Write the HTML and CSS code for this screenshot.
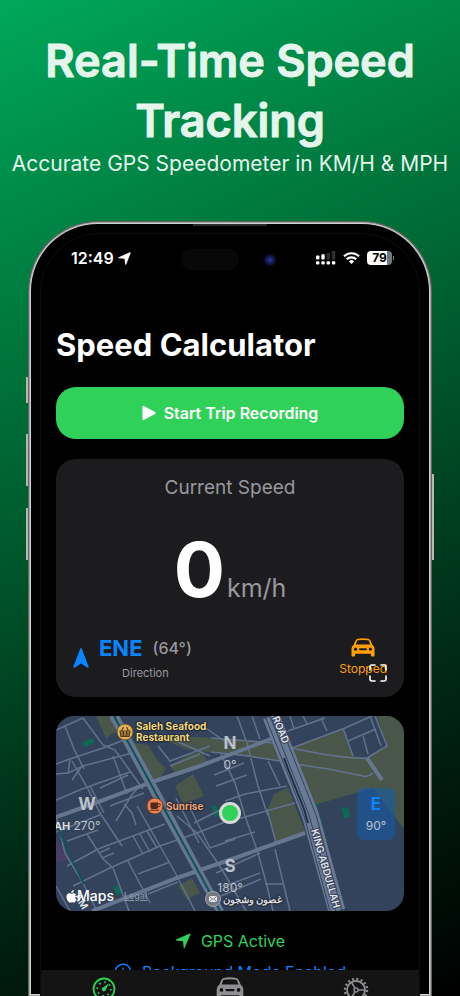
FILE: index.html
```html
<!DOCTYPE html>
<html lang="en">
<head>
    <meta charset="utf-8">
    <meta name="viewport" content="width=device-width, initial-scale=1">
    <title>Speed Calculator</title>
    <link rel="stylesheet" href="styles.css">
</head>
<body>
    <header class="hero">
        <h1>Real-Time Speed Tracking</h1>
        <p>Accurate GPS Speedometer in KM/H &amp; MPH</p>
    </header>

    <main class="phone">
        <span class="side-key key-action"></span>
        <span class="side-key key-up"></span>
        <span class="side-key key-down"></span>
        <span class="side-key key-power"></span>
        <span class="earpiece"></span>

        <div class="screen">
            <div class="status-bar">
                <div class="status-left">
                    <span>12:49</span>
                    <svg width="13" height="13" viewBox="0 0 13 13"><path d="M12.700.9 8.200 12.400q-.5.9-1-.1L6.500 6.700.8 6.200q-1.100-.4 0-1L11.800.2q1.100-.2.900.7z" fill="#fff"/></svg>
                </div>
                <span class="island"></span>
                <span class="lens"></span>
                <div class="status-right">
                    <svg width="20" height="14" viewBox="0 0 20 14">
                        <g fill="#fff">
                            <rect x="0" y="4.500" width="3.400" height="4" rx=".8"/>
                            <rect x="5.300" y="3.300" width="3.400" height="5.200" rx=".8"/>
                            <rect x="0" y="10.200" width="3.400" height="3.200" rx="1"/>
                            <rect x="5.300" y="10.200" width="3.400" height="3.200" rx="1"/>
                            <rect x="10.600" y="10.200" width="3.400" height="3.200" rx="1"/>
                            <rect x="15.900" y="10.200" width="3.400" height="3.200" rx="1"/>
                        </g>
                        <g fill="#303032">
                            <rect x="10.600" y="2" width="3.400" height="6.500" rx=".8"/>
                            <rect x="15.900" y="0" width="3.400" height="8.500" rx=".8"/>
                        </g>
                    </svg>
                    <svg width="17" height="12" viewBox="0 0 17 12">
                        <g fill="none" stroke="#fff" stroke-width="2.200">
                            <path d="M1 4.300a10.800 10.800 0 0 1 15 0"/>
                            <path d="M3.800 7.300a6.700 6.700 0 0 1 9.400 0"/>
                        </g>
                        <path d="M8.500 12 5.900 9.400a3.700 3.700 0 0 1 5.200 0z" fill="#fff"/>
                    </svg>
                    <span class="battery">79</span>
                </div>
            </div>

            <div class="content">
                <h2>Speed Calculator</h2>

                <button type="button" class="start">
                    <svg width="14" height="16" viewBox="0 0 14 16"><path d="M.5 1.800q0-1.500 1.400-.8l11.200 6q1.200 1 0 2l-11.200 6q-1.400.6-1.400-.8z" fill="#fff"/></svg>
                    Start Trip Recording
                </button>

                <section class="card">
                    <h3>Current Speed</h3>
                    <div class="speed"><strong>0</strong><span>km/h</span></div>
                    <div class="card-row">
                        <div class="direction">
                            <svg width="16" height="20" viewBox="0 0 16 20"><path d="M8 0q.5 0 .7.6L15.600 18.500q.3 1.500-1 1.200L8 15.500 1.400 19.700q-1.300.3-1-1.200L7.300.6Q7.500 0 8 0z" fill="#0a84ff"/></svg>
                            <div>
                                <div class="heading"><b>ENE</b><span>(64°)</span></div>
                                <div class="caption">Direction</div>
                            </div>
                        </div>
                        <div class="motion">
                            <svg width="24" height="19" viewBox="0 0 24 19">
                                <path fill-rule="evenodd" fill="#ff9f0a" d="M6.500.8Q12-.3 17.500.8q1.500.4 2 1.700l1.800 4.300q2.200 1.300 2.200 4v6.800q0 .9-.9.9h-1.800q-.9 0-.9-.9v-1.900h-15.800v1.900q0 .9-.9.9H1.400q-.9 0-.9-.9v-6.800q0-2.700 2.200-4L4.500 2.500q.5-1.300 2-1.700zM7 2.300q-.7.100-1 .8L4.800 6.500h14.400L18 3.100q-.3-.7-1-.8-5-.8-10 0zM4.600 9.600a1.600 1.600 0 1 0 0 3.200 1.600 1.600 0 0 0 0-3.200zm14.800 0a1.600 1.600 0 1 0 0 3.200 1.600 1.600 0 0 0 0-3.200zM9 10.300a.9.900 0 0 0 0 1.900h6a.9.900 0 0 0 0-1.900z"/>
                            </svg>
                            <span>Stopped</span>
                        </div>
                    </div>
                    <button type="button" class="expand" aria-label="Full screen">
                        <svg width="18" height="18" viewBox="0 0 18 18"><path d="M1 6V3q0-2 2-2h3M12 1h3q2 0 2 2v3M17 12v3q0 2-2 2h-3M6 17H3q-2 0-2-2v-3" fill="none" stroke="#fff" stroke-width="1.600" stroke-linecap="round"/></svg>
                    </button>
                </section>

                <section class="map">
                    <svg class="map-art" viewBox="0 0 348 195" preserveAspectRatio="xMidYMid slice">
                        <rect width="348" height="195" fill="#33435b"/>
                        <!-- parks -->
                        <g fill="#48574a">
                            <path d="M40 0h17l5 14-12 8zM77 27l15 2 10 16 8 7-8 14-9 4zM114 50l18-11 14-4 5 10-30 14zM119 70l18-12 11 22-21 8z"/>
                            <path d="M92 18l25 2 62 3 40 4 5 18-45-6-50-6-16-7z"/>
                            <path d="M236 32l51-20 10 28 14 2 20-12L321 0h27v113l-31-41-62 18-23-50z"/>
                            <path d="M218 78l14-7 18 47-30 11-8-36zM122 170l14-8 8 15-13 7z"/>
                        </g>
                        <path d="M0 122l14 20-14 6z" fill="#463f63"/>
                        <g fill="#0b6955">
                            <path d="M27 26l9-4 2 5-10 4zM57 171l5-2 4 8-5 3zM155 90l5-1 3 11-4 1zM257 87h4v7h-4zM261 104l4-1 3 14-4 1zM286 92l6-1 2 10-6 1z"/>
                        </g>
                        <!-- minor streets -->
                        <g class="streets">
                            <path d="M0 14L27 2M9 10l9 23 10 20M27 2l20 27 12 5 28 39M16 45l16 28 12 24 22 33M0 48l14-5 36-12 23-9M0 58l12-1 15-7 49-13M0 84l26-11 48-17M14 43l-2 15M26 50l-10 14"/>
                            <path d="M34 70l14 27M44 72l28-13M54 90l34-13M57 40l14 38M0 116l44-17M11 125l31-11M11 150l31-17 67-25M17 170l37-18 50-22 37-13 38-15"/>
                            <path d="M0 100l9 37 18 30 14 28M31 118l16 25 10 9 16 43M43 137l11-5M46 142l12-5M72 145l22 42M77 120l10 18M84 118l10 18M91 115l10 17M81 90l23 40 17 30 18 35M82 158l32-12M92 178l30-12"/>
                            <path d="M121 100l20 17 16 23 11 17 22 38M134 92l20 40M154 132l25-9M138 107l40-20M160 157l44-20M165 180l40-17M120 82l23 45M102 30l12 15 40-15M109 20l45 20M114 50l30-12M150 12l25 18"/>
                            <path d="M181 0l10 27 11 43 10 30M196 0l8 23M155 22l64 5M155 36l37 4 32 5M212 45l12 25M165 38l14 29 10 33 13 37 9 33 6 25M160 70l31-11M169 85l20-7 42-8M178 104l61-17M169 125l30-9M219 133l15 62M204 157l-35 13M209 168h18M211 93l9 34M188 47l-30 12"/>
                            <path d="M234 32l32 6q30 5 45 4l20-12L319 0M239 48l33 5 35 7q6 1 10-3M226 17l43-15M236 32l53-20 27-12M287 12l10 28M292 25l28-12M307 20l5 18M265 2l6 13M234 0l4 13M247 0l4 8M314 0l11 30"/>
                            <path d="M0 170l14 25M60 105l15-25 9-11M68 88l8 9 4 12"/>
                        </g>
                        <!-- main roads -->
                        <g class="avenues">
                            <path d="M0 101l34-12 40-15 25-9 42-14 53-20 34-13M36 195l85-33 58-20 70-25M311 42l15 22"/>
                            <path d="M55 0l52 96 55 99M61 0l52 96 53 99"/>
                        </g>
                        <path d="M58 0l52 96 54 99M0 107l14 33 14 28" fill="none" stroke="#13515c" stroke-width="2"/>
                        <path d="M215 0l17 43 22 55 27 97" fill="none" stroke="#6b7a94" stroke-width="17"/>
                        <path d="M209 0l17 43 22 57 26 95M214 0l17 43 22 56 27 96M221 0l17 43 22 56 26 96" fill="none" stroke="#34435c" stroke-width="1"/>
                        <path d="M228 42l6 16 14 35 4 14" fill="none" stroke="#202e45" stroke-width="2"/>
                        <g class="road-names">
                            <text transform="translate(216 2) rotate(67)">ROAD</text>
                            <text transform="translate(255 114) rotate(74)">KING ABDULLAH</text>
                            <text transform="translate(18 180) rotate(59)">AM</text>
                        </g>
                    </svg>

                    <div class="pin pin-food">
                        <svg width="18" height="18" viewBox="0 0 18 18">
                            <circle cx="9" cy="9" r="8" fill="#e5b152" stroke="#655434"/>
                            <path d="M4 8h10l-1 5.500H5zM5.500 8l2-4M12.500 8l-2-4M4.500 10h9M5 12h8M7.300 8v5.500M10.700 8v5.500" fill="none" stroke="#53401e" stroke-width="1.200"/>
                        </svg>
                        <span>Saleh Seafood<br>Restaurant</span>
                    </div>
                    <div class="pin pin-cafe">
                        <svg width="18" height="18" viewBox="0 0 18 18">
                            <circle cx="9" cy="9" r="8" fill="#ee8250" stroke="#6c4435"/>
                            <path d="M4.500 5.500h7.500v4.500q0 2-2 2H6.500q-2 0-2-2z" fill="#4f2919"/>
                            <path d="M12 6.500q2.500-.3 2.300 1.500T12 10M4 13.200h9" fill="none" stroke="#4f2919"/>
                        </svg>
                        <span>Sunrise</span>
                    </div>
                    <div class="pin pin-shop">
                        <svg width="16" height="16" viewBox="0 0 16 16">
                            <circle cx="8" cy="8" r="7.500" fill="#737984" stroke="#a2a5ad"/>
                            <rect x="4" y="5" width="8" height="6" rx="1" fill="#e8e8ea"/>
                            <path d="M4.500 5.500 8 8.500l3.500-3M4.500 10.500l2.300-2M11.500 10.500l-2.300-2" fill="none" stroke="#666c78" stroke-width=".9"/>
                        </svg>
                        <span lang="ar" dir="rtl">غصون وشجون</span>
                    </div>

                    <div class="compass north"><b>N</b><span>0°</span></div>
                    <div class="compass west"><b>W</b><span>270°</span></div>
                    <div class="compass south"><b>S</b><span>180°</span></div>
                    <div class="compass east"><b>E</b><span>90°</span></div>
                    <span class="street-end">AH</span>
                    <span class="me"></span>

                    <div class="maps-brand">
                        <svg width="11" height="13" viewBox="0 0 11 13"><path d="M7.800.1q.1 1.300-.7 2.200t-1.900.8Q5 2 5.900 1.100 6.700.2 7.800.1zM5.500 3.700q.5 0 1.200-.3 2.100-.7 3.500 1-1.500.9-1.300 2.500.1 1.700 1.700 2.300-.4 1.400-1.300 2.500-.8 1.100-1.800.9-1.500-.7-2.800 0-1.100.4-2-.7Q.5 9.800.400 7.300.400 3.900 3 3.300q.8-.2 2.500.4z" fill="#fff"/></svg>
                        <span>Maps</span>
                        <a href="#">Legal</a>
                    </div>
                </section>

                <div class="notice gps">
                    <svg width="16" height="16" viewBox="0 0 16 16"><path d="M15.500 1.200 9.600 15q-.5.9-.9-.1L8 8.200 1.200 7.500q-1-.3-.1-.9L14.800.5q1-.2.7.7z" fill="#30d158"/></svg>
                    GPS Active
                </div>
                <div class="notice background">
                    <svg width="18" height="18" viewBox="0 0 18 18"><path d="M1.200 9.500a7.800 7.800 0 1 1 2.500 5.300M9 4.500V9.500l3 2M0 7.500l1.300 2.300 2.400-1.600" fill="none" stroke="#0a84ff" stroke-width="1.400"/></svg>
                    Background Mode Enabled
                </div>
            </div>

            <nav class="tab-bar">
                <a href="#" aria-label="Speed">
                    <svg width="24" height="24" viewBox="0 0 24 24">
                        <circle cx="12" cy="12" r="10.500" fill="none" stroke="#30d158" stroke-width="1.800"/>
                        <circle cx="12" cy="12" r="6.800" fill="none" stroke="#30d158" stroke-width="1.800" stroke-dasharray="1.600 3.740"/>
                        <path d="M16.800 6.500 13.700 13a2 2 0 1 1-2.800-2.500z" fill="#30d158"/>
                    </svg>
                </a>
                <a href="#" aria-label="Trips">
                    <svg width="28" height="22" viewBox="0 0 24 19">
                        <path fill-rule="evenodd" fill="#8e8e93" d="M6.500.8Q12-.3 17.500.8q1.500.4 2 1.700l1.800 4.300q2.200 1.300 2.200 4v6.800q0 .9-.9.9h-1.800q-.9 0-.9-.9v-1.900h-15.800v1.900q0 .9-.9.9H1.400q-.9 0-.9-.9v-6.800q0-2.700 2.200-4L4.500 2.500q.5-1.300 2-1.700zM7 2.300q-.7.100-1 .8L4.800 6.500h14.400L18 3.100q-.3-.7-1-.8-5-.8-10 0zM4.600 9.600a1.600 1.600 0 1 0 0 3.200 1.600 1.600 0 0 0 0-3.200zm14.800 0a1.600 1.600 0 1 0 0 3.200 1.600 1.600 0 0 0 0-3.200zM9 10.300a.9.900 0 0 0 0 1.900h6a.9.900 0 0 0 0-1.900z"/>
                    </svg>
                </a>
                <a href="#" aria-label="Settings">
                    <svg width="26" height="26" viewBox="0 0 26 26" fill="none" stroke="#8e8e93">
                        <circle cx="13" cy="13" r="11" stroke-width="2.400" stroke-dasharray="2 2.320"/>
                        <circle cx="13" cy="13" r="9" stroke-width="1.800"/>
                        <circle cx="13" cy="13" r="2" stroke-width="1.500"/>
                        <path d="M15 13h7M12 11.300 8.500 5.200M12 14.700l-3.500 6.100" stroke-width="1.600"/>
                    </svg>
                </a>
            </nav>
        </div>
    </main>
</body>
</html>
```
FILE: styles.css
```css
* {
    box-sizing: border-box;
}

body {
    margin: 0;
    height: 100vh;
    display: flex;
    flex-direction: column;
    overflow: hidden;
    font-family: Inter, "Liberation Sans", sans-serif;
    color: #fff;
    background: linear-gradient(155deg, #00a85a 0%, #006633 38%, #002413 75%, #000 100%);
}

h1, h2, h3, p {
    margin: 0;
}

button {
    border: 0;
    padding: 0;
    font-family: inherit;
    color: inherit;
    cursor: pointer;
}

svg {
    display: block;
    flex: none;
}

/* headline */
.hero {
    padding: 31px 8px 44px;
    text-align: center;
    color: #e6f5ec;
}

.hero h1 {
    max-width: 400px;
    margin: 0 auto;
    font-size: 45px;
    line-height: 60px;
    font-weight: 600;
    -webkit-text-stroke: 1px #e6f5ec;
}

.hero p {
    font-size: 21px;
    line-height: 26px;
    font-weight: 400;
    white-space: nowrap;
}

/* phone */
.phone {
    position: relative;
    flex: 1;
    min-height: 0;
    margin: 0 28px;
    padding: 12px 12px 0;
    border: 1px solid #5d6762;
    border-bottom: 0;
    border-radius: 70px 70px 0 0;
    background: #000;
    box-shadow: inset 0 0 0 1px #a3a5a2, inset 0 0 0 2px #d0d0ce;
}

.side-key {
    position: absolute;
    left: -3px;
    width: 2px;
    height: 52px;
    background: #b5bab7;
}

.key-action {
    top: 155px;
    height: 26px;
}

.key-up {
    top: 212px;
}

.key-down {
    top: 286px;
}

.key-power {
    top: 252px;
    left: auto;
    right: -3px;
    height: 86px;
}

.earpiece {
    position: absolute;
    top: 2px;
    left: 50%;
    width: 74px;
    height: 2px;
    margin-left: -37px;
    background: #2b2b2b;
}

.screen {
    height: 100%;
    display: flex;
    flex-direction: column;
    overflow: hidden;
    border-radius: 58px 58px 0 0;
    box-shadow: 0 0 0 1px #0c0c0c;
}

.status-bar {
    position: relative;
    display: flex;
    flex: none;
    justify-content: space-between;
    align-items: center;
    height: 48px;
    padding: 0 27px 0 30px;
}

.status-left {
    display: flex;
    align-items: center;
    gap: 4px;
    font-size: 16px;
    font-weight: 600;
}

.island {
    position: absolute;
    top: 15px;
    left: 140px;
    width: 58px;
    height: 21px;
    border-radius: 11px;
    background: #080808;
}

.lens {
    position: absolute;
    top: 20px;
    left: 223px;
    width: 12px;
    height: 12px;
    border-radius: 50%;
    background: radial-gradient(circle, #2b3a9c 0, #141a55 40%, #05050c 80%);
}

.status-right {
    display: flex;
    align-items: center;
    gap: 7px;
}

.battery {
    position: relative;
    width: 25px;
    border-radius: 4px;
    background: linear-gradient(90deg, #fff 79%, #77777a 79%);
    color: #000;
    font-size: 12px;
    line-height: 14px;
    font-weight: 700;
    text-align: center;
}

.battery::after {
    content: "";
    position: absolute;
    top: 5px;
    right: -2px;
    width: 1px;
    height: 4px;
    background: #77777a;
}

.content {
    flex: 1;
    min-height: 0;
    overflow: hidden;
    padding: 43px 15px 0;
}

.content h2 {
    margin-bottom: 22px;
    font-size: 31px;
    line-height: 40px;
    font-weight: 700;
}

.start {
    display: flex;
    justify-content: center;
    align-items: center;
    gap: 8px;
    width: 100%;
    height: 52px;
    margin-bottom: 20px;
    border-radius: 20px;
    background: #30d158;
    font-size: 16px;
    font-weight: 600;
}

/* speed card */
.card {
    position: relative;
    margin-bottom: 19px;
    padding: 16px 17px 14px;
    border-radius: 20px;
    background: #1c1c1e;
    text-align: center;
}

.card h3 {
    font-size: 19px;
    line-height: 26px;
    font-weight: 400;
    color: #98989f;
}

.speed {
    display: flex;
    justify-content: center;
    align-items: baseline;
    gap: 2px;
    margin: 30px 0 7px;
    line-height: 76px;
}

.speed strong {
    font-size: 76px;
    font-weight: 700;
}

.speed span {
    font-size: 25px;
    color: #98989f;
}

.card-row {
    display: flex;
    justify-content: space-between;
}

.direction {
    display: flex;
    align-items: center;
    gap: 10px;
}

.heading {
    display: flex;
    align-items: center;
    gap: 10px;
    line-height: 30px;
}

.heading b {
    font-size: 22px;
    color: #0a84ff;
}

.heading span {
    font-size: 16px;
    font-weight: 500;
    color: #98989f;
}

.caption {
    font-size: 11px;
    line-height: 20px;
    color: #98989f;
}

.motion {
    display: flex;
    flex-direction: column;
    align-items: center;
    gap: 4px;
    padding-top: 5px;
    font-size: 12px;
    line-height: 16px;
    color: #ff9f0a;
}

.expand {
    position: absolute;
    right: 17px;
    bottom: 15px;
    background: none;
}

/* map */
.map {
    position: relative;
    overflow: hidden;
    margin-bottom: 18px;
    border-radius: 18px;
    color: #bcc2cb;
}

.map-art {
    width: 100%;
    height: auto;
}

.streets {
    fill: none;
    stroke: #62728d;
    stroke-width: 1.5;
}

.avenues {
    fill: none;
    stroke: #66768f;
    stroke-width: 4;
}

.road-names {
    font-size: 10px;
    font-weight: 600;
    fill: #e1e5ec;
    stroke: #36435a;
    stroke-width: 2;
    paint-order: stroke;
}

.pin {
    position: absolute;
    display: flex;
    align-items: center;
    gap: 2px;
    font-size: 10px;
    line-height: 11px;
    font-weight: 700;
    text-shadow: 0 0 2px #111, 0 0 2px #111;
}

.pin-food {
    top: 5px;
    left: 60px;
    color: #f1da83;
}

.pin-cafe {
    top: 81px;
    left: 90px;
    color: #f2a77d;
}

.pin-shop {
    top: 175px;
    left: 149px;
    color: #d8dce2;
}

.compass {
    position: absolute;
    display: flex;
    flex-direction: column;
    align-items: center;
    width: 38px;
    font-size: 12px;
    line-height: 21px;
}

.compass b {
    font-size: 17px;
}

.north {
    top: 17px;
    left: 155px;
}

.west {
    top: 78px;
    left: 12px;
}

.south {
    top: 140px;
    left: 155px;
}

.east {
    top: 72px;
    right: 9px;
    padding: 6px 0 4px;
    border-radius: 6px;
    background: rgba(24, 92, 168, 0.6);
}

.east b {
    color: #0a84ff;
}

.street-end {
    position: absolute;
    top: 103px;
    left: -2px;
    font-size: 11px;
    line-height: 14px;
    font-weight: 600;
    color: #dfe3ea;
}

.me {
    position: absolute;
    top: 86px;
    left: 163px;
    width: 22px;
    height: 22px;
    border: 3px solid #d8dad9;
    border-radius: 50%;
    background: #30d158;
}

.maps-brand {
    position: absolute;
    left: 10px;
    bottom: 6px;
    display: flex;
    align-items: center;
    font-size: 14px;
    line-height: 18px;
    font-weight: 500;
    color: #fff;
}

.maps-brand a {
    margin-left: 10px;
    font-size: 9px;
    color: #8b95a6;
}

.notice {
    display: flex;
    justify-content: center;
    align-items: center;
    gap: 10px;
    margin-bottom: 7px;
    font-size: 16px;
    line-height: 24px;
}

.gps {
    color: #30d158;
}

.background {
    color: #0a84ff;
}

.tab-bar {
    display: flex;
    flex: none;
    height: 26px;
    overflow: hidden;
    background: #141415;
}

.tab-bar a {
    display: flex;
    flex: 1;
    justify-content: center;
    align-items: flex-start;
    padding-top: 7px;
}
```
